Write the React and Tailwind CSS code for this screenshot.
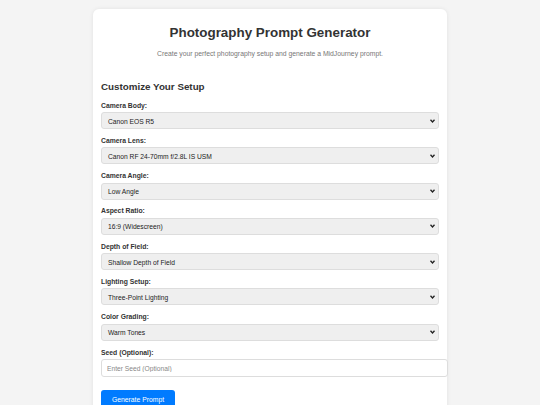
const fields = [
  { label: 'Camera Body:', value: 'Canon EOS R5' },
  { label: 'Camera Lens:', value: 'Canon RF 24-70mm f/2.8L IS USM' },
  { label: 'Camera Angle:', value: 'Low Angle' },
  { label: 'Aspect Ratio:', value: '16:9 (Widescreen)' },
  { label: 'Depth of Field:', value: 'Shallow Depth of Field' },
  { label: 'Lighting Setup:', value: 'Three-Point Lighting' },
  { label: 'Color Grading:', value: 'Warm Tones' },
]

function Chevron() {
  return (
    <svg className="absolute right-[3px] top-1/2 -translate-y-1/2" width="5" height="4" viewBox="0 0 5 4">
      <path d="M0.5 0.8 L2.5 3 L4.5 0.8" fill="none" stroke="#222" strokeWidth="1.3" />
    </svg>
  )
}

export default function App() {
  return (
    <div className="min-h-[405px] bg-[#f4f4f4] pt-[9px] font-['Liberation_Sans',Arial,sans-serif] text-[#333]">
      <div className="mx-auto w-[354px] rounded-[6px] bg-white px-[8px] pt-[15px] pb-[20px] shadow-[0_0_4px_rgba(0,0,0,0.08)]">
        <h1 className="text-center text-[13.4px] font-bold leading-[18px] text-[#333]">Photography Prompt Generator</h1>
        <p className="mt-[6.5px] text-center text-[6.8px] leading-[9px] text-[#777]">
          Create your perfect photography setup and generate a MidJourney prompt.
        </p>

        <h2 className="mt-[23.5px] text-[9.8px] font-bold leading-[12px] text-[#333]">Customize Your Setup</h2>

        <div className="mt-[7.5px] flex flex-col">
          {fields.map((f) => (
            <div key={f.label} className="mb-[6.8px]">
              <label className="block text-[6.8px] font-bold leading-[9px] text-[#333]">{f.label}</label>
              <div className="relative mt-[2.5px] h-[17px] w-[338px] rounded-[3px] border border-[#ddd] bg-[#efefef]">
                <span className="absolute left-[6px] top-1/2 -translate-y-1/2 text-[6.7px] leading-[9px] text-[#222]">{f.value}</span>
                <Chevron />
              </div>
            </div>
          ))}
          <div>
            <label className="block text-[6.8px] font-bold leading-[9px] text-[#333]">Seed (Optional):</label>
            <input
              placeholder="Enter Seed (Optional)"
              className="mt-[2.5px] block h-[18px] w-[347px] rounded-[3px] border border-[#ddd] bg-white px-[5px] text-[6.7px] text-[#222] placeholder:text-[#888] outline-none"
            />
          </div>
          <button className="mt-[13px] block h-[20px] w-[74px] rounded-[3px] bg-[#007bff] text-[6.8px] text-white">
            Generate Prompt
          </button>
        </div>
      </div>
    </div>
  )
}
